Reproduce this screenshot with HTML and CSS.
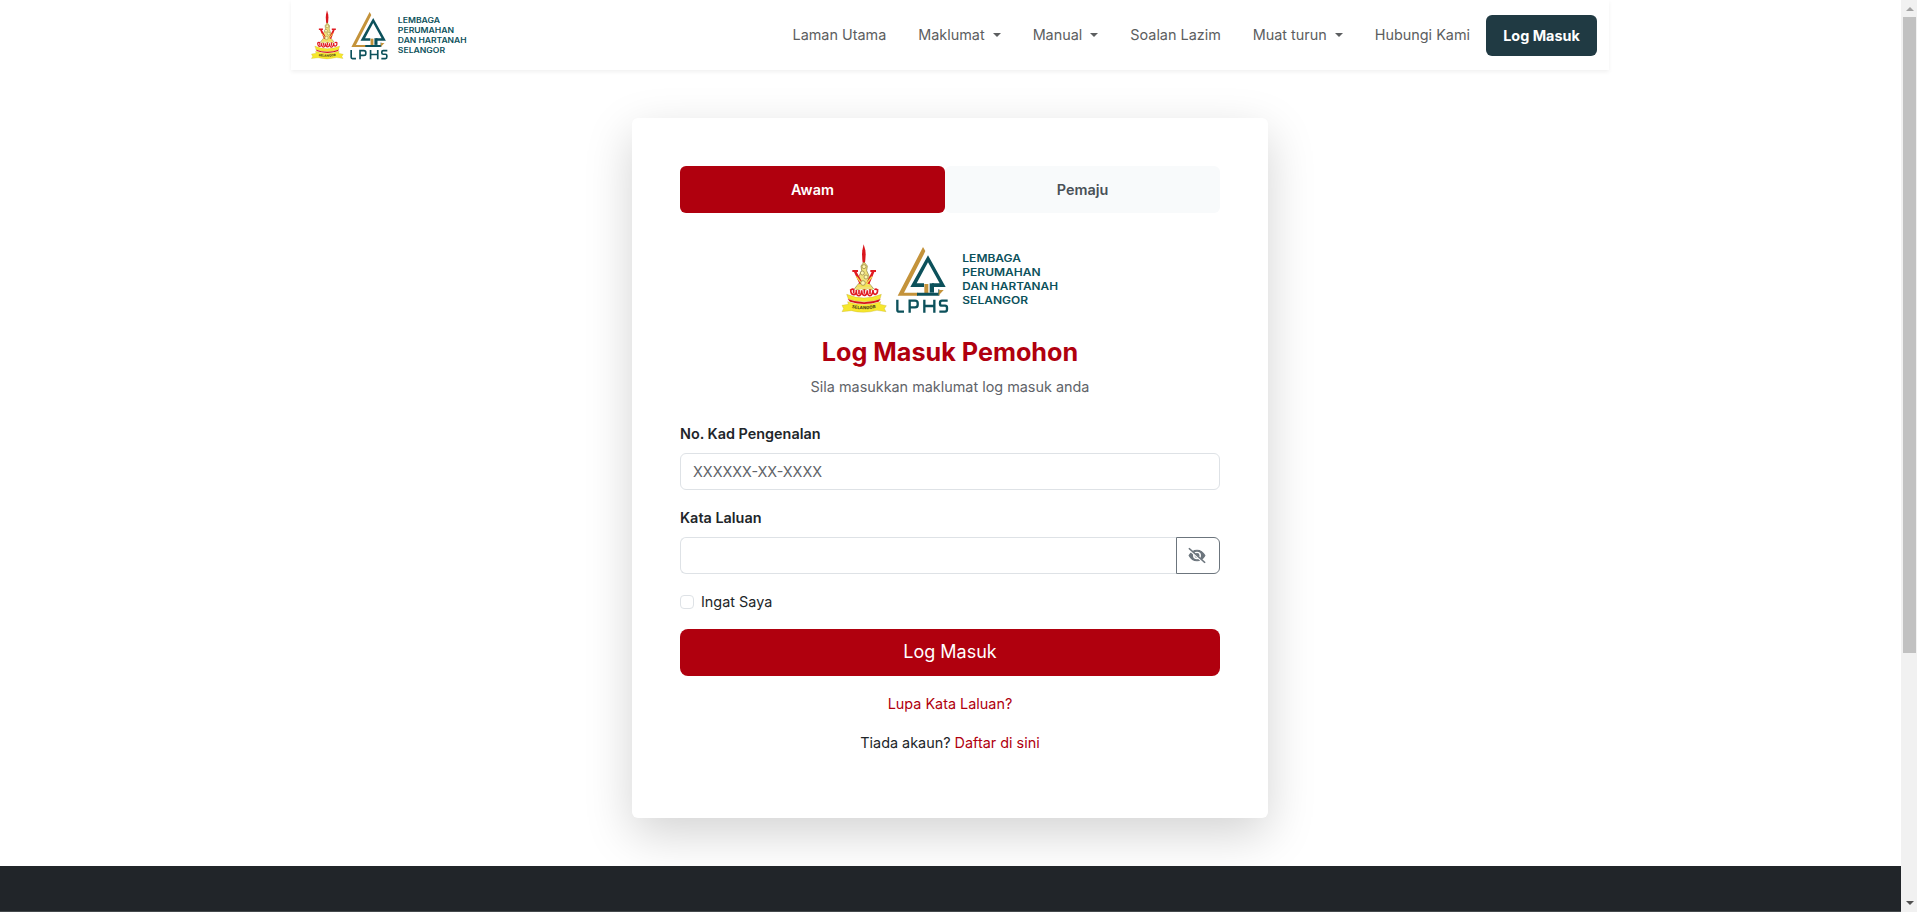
FILE: index.html
```html
<!DOCTYPE html>
<html lang="ms">
<head>
<meta charset="utf-8">
<title>Log Masuk Pemohon</title>
<link rel="stylesheet" href="styles.css">
</head>
<body>
<div class="window">
  <div class="page">
    <header class="navbar">
      <svg class="brand" viewBox="60 30 660 225" role="img" aria-label="LPHS">
        <g id="logo">
          <!-- state crest -->
          <path d="M131 43l-4 18-1 12 1 17 1 8h7l1-8 1-17-1-12z" fill="#d9151c"/>
          <path d="M132 96l-9 12 2 14-9 18 4 16-20 24h64l-20-24 4-16-8-18 2-14z" fill="#f0e27a" stroke="#8d7d35" stroke-width="2"/>
          <path d="M97 120h17v6h-4l18 33-9 4-17-37h-5zM168 120h-17v6h4l-16 33 9 4 15-37h5z" fill="#e01b22"/>
          <path d="M109 140l19 24M156 140l-19 24M112 168h40" stroke="#f3e34a" stroke-width="4"/>
          <circle cx="132" cy="110" r="6" fill="#fff7b0" stroke="#8b7b42" stroke-width="2"/>
          <circle cx="127" cy="129" r="6" fill="#fff7b0" stroke="#8b7b42" stroke-width="2"/>
          <circle cx="138" cy="141" r="6" fill="#fff7b0" stroke="#8b7b42" stroke-width="2"/>
          <circle cx="129" cy="159" r="7" fill="#fff7b0" stroke="#8b7b42" stroke-width="2"/>
          <path d="M92 183q0-8 12-7l8 5 12-4 9 5 10-5 10 5 8-6q14 0 12 10l-9 12q-32 9-63 0z" fill="#fff"/>
          <path d="M92 178q0 16 9 16t8-14q-1 17 7 17t9-16q0 15 8 15t9-15q0 17 8 16t9-17q0 14 7 13t7-15M101 178v12M117 180v12M133 178v13M150 178v14M92 181q5-7 11-1M163 179q8-5 10 4" fill="none" stroke="#e01b22" stroke-width="5"/>
          <path d="M80 193q52 22 104 0l-4 14q-47 17-95 0z" fill="#f6e72d" stroke="#b79d2a"/>
          <path d="M83 207q49 20 99 0l-6 8q-43 14-86 0z" fill="#d9151c"/>
          <path d="M66 226l19-3-2-8q49 17 99 0l-2 8 19 4-6 9 5 9-27-4q-40 11-77 1l-28 3 5-9z" fill="#f6e72d" stroke="#c1ae2b"/>
          <path id="ribbon" d="M95 234q39 8 76-1" fill="none"/>
          <text class="ribbon-text"><textPath href="#ribbon" textLength="73" lengthAdjust="spacingAndGlyphs">SELANGOR</textPath></text>
          <!-- roof mark -->
          <path d="M309 51L233 197H294V188H252L312 72L316 63Z" fill="#c4933b"/>
          <path fill="#0c515b" fill-rule="evenodd" d="M324 76L271 171H312V160H290L324 97L359 160H336V171H377Z"/>
          <path d="M329 160h13v28h-13z" fill="#0c515b"/>
          <path d="M313 162h12v27h-12z" fill="#c4933b"/>
          <path d="M291 188H355V178H358V197H291Z" fill="#0c515b"/>
          <path d="M357 180h14l-16 17z" fill="#c4933b"/>
          <path fill="none" stroke="#0c515b" stroke-width="7" d="M232 209v31q0 5 5 5h15M269 248V212h16q8 0 8 7v6q0 7-8 7h-16M313 209v39M343 209v39M313 228h30M383 212h-17q-6 0-6 6v3q0 6 6 6h9q6 0 6 6v5q0 7-6 7h-17"/>
          <g class="logo-text">
            <text x="427" y="95" textLength="176" lengthAdjust="spacingAndGlyphs">LEMBAGA</text>
            <text x="427" y="138" textLength="235" lengthAdjust="spacingAndGlyphs">PERUMAHAN</text>
            <text x="427" y="181" textLength="287" lengthAdjust="spacingAndGlyphs">DAN HARTANAH</text>
            <text x="427" y="223" textLength="197" lengthAdjust="spacingAndGlyphs">SELANGOR</text>
          </g>
        </g>
      </svg>
      <nav class="nav">
        <a class="nav-link">Laman Utama</a>
        <a class="nav-link caret">Maklumat</a>
        <a class="nav-link caret">Manual</a>
        <a class="nav-link">Soalan Lazim</a>
        <a class="nav-link caret">Muat turun</a>
        <a class="nav-link">Hubungi Kami</a>
        <a class="nav-button">Log Masuk</a>
      </nav>
    </header>
    <main class="card">
      <div class="tabs">
        <a class="tab active">Awam</a>
        <a class="tab">Pemaju</a>
      </div>
      <svg class="card-logo" viewBox="60 30 660 225" role="img" aria-label="LPHS"><use href="#logo"/></svg>
      <h1 class="title">Log Masuk Pemohon</h1>
      <p class="subtitle">Sila masukkan maklumat log masuk anda</p>
      <form class="form">
        <label class="label">No. Kad Pengenalan</label>
        <input class="input" type="text" placeholder="XXXXXX-XX-XXXX">
        <label class="label">Kata Laluan</label>
        <div class="group">
          <input class="input" type="password">
          <button class="toggle" type="button" aria-label="Papar">
            <svg width="18" height="17" viewBox="0 0 16 16" preserveAspectRatio="none" fill="none" stroke="currentColor"><path d="M1 8Q3.500 3 8 3T15 8Q12.500 13 8 13T1 8Z" fill="currentColor"/><circle cx="8" cy="8" r="2.900" stroke="#fff" stroke-width="1.300"/><path d="M1.200 2.600L14.200 14.900" stroke="#fff" stroke-width="2"/><path d="M.8 1.200L15.200 14.800" stroke-width="1.500"/></svg>
          </button>
        </div>
        <label class="remember"><input class="check" type="checkbox">Ingat Saya</label>
        <button class="submit" type="button">Log Masuk</button>
      </form>
      <a class="forgot">Lupa Kata Laluan?</a>
      <p class="register">Tiada akaun? <a class="link">Daftar di sini</a></p>
    </main>
    <footer class="footer"></footer>
  </div>
  <div class="scrollbar">
    <i class="arrow up"></i>
    <i class="thumb"></i>
    <i class="arrow down"></i>
  </div>
</div>
</body>
</html>
```
FILE: styles.css
```css
* { box-sizing: border-box; }
body {
  margin: 0;
  overflow: hidden;
  background: #fff;
  color: #212529;
  font: 400 14.4px/1.5 Inter, "Liberation Sans", sans-serif;
}
.window { display: flex; height: 912px; }
.page {
  flex: 1;
  display: flex;
  flex-direction: column;
  align-items: center;
  padding-right: 1px;
}
.navbar {
  width: 1318px;
  height: 70px;
  padding: 0 12px 0 19px;
  display: flex;
  justify-content: space-between;
  align-items: flex-start;
  background: #fff;
  box-shadow: 0 2px 4px rgba(0, 0, 0, .06);
}
.brand { width: 158px; height: 54px; margin-top: 7px; }
.nav { display: flex; align-items: center; height: 70px; }
.nav-link { padding: 0 16px; color: #5c5e60; }
.caret::after {
  content: "";
  display: inline-block;
  margin-left: 8px;
  vertical-align: 3.5px;
  border: 4px solid transparent;
  border-top-color: currentColor;
  border-bottom: 0;
}
.nav-button {
  width: 111px;
  height: 41px;
  line-height: 42px;
  text-align: center;
  border-radius: 6px;
  background: #203a43;
  color: #fff;
  font-weight: 700;
}
.card {
  width: 636px;
  height: 700px;
  margin: 48px 0;
  padding: 48px;
  flex: none;
  display: flex;
  flex-direction: column;
  align-items: center;
  border-radius: 6px;
  background: #fff;
  box-shadow: 0 16px 48px rgba(0, 0, 0, .175);
}
.tabs { display: flex; width: 100%; }
.tab {
  flex: 1;
  height: 47px;
  line-height: 47px;
  text-align: center;
  border-radius: 6px;
  background: #f8fafb;
  color: #495057;
  font-weight: 600;
}
.tab.active { flex: 0 0 265px; background: #b0000e; color: #fff; }
.card-logo { width: 220px; height: 75px; margin: 27px 0 20px; }
.title {
  margin: 0;
  font-size: 25.2px;
  line-height: 34px;
  font-weight: 700;
  color: #b0000e;
}
.subtitle { margin: 7px 0 25px; line-height: 22px; color: #5f6469; }
.form { width: 100%; display: flex; flex-direction: column; }
.label { height: 22px; line-height: 22px; margin-bottom: 8px; font-weight: 600; }
.input {
  width: 100%;
  height: 37px;
  padding: 0 12px;
  margin: 0 0 17px;
  border: 1px solid #dee2e6;
  border-radius: 6px;
  font: inherit;
  background: #fff;
}
.input::placeholder { color: #5f6469; opacity: 1; }
.group { display: flex; margin-bottom: 17px; }
.group .input { margin: 0; border-right: 0; border-radius: 6px 0 0 6px; }
.toggle {
  width: 44px;
  flex: none;
  display: grid;
  place-items: center;
  padding: 0 2px 0 0;
  border: 1px solid #6c757d;
  border-radius: 0 6px 6px 0;
  background: #fff;
  color: #6c757d;
}
.remember { display: flex; align-items: center; gap: 7px; height: 22px; margin-bottom: 16px; }
.check {
  appearance: none;
  width: 14px;
  height: 14px;
  margin: 0;
  border: 1px solid #dee2e6;
  border-radius: 4px;
}
.submit {
  height: 47px;
  padding: 0 0 2px;
  border: 0;
  border-radius: 8px;
  background: #b0000e;
  color: #fff;
  font: 400 18px/45px Inter, sans-serif;
}
.forgot { margin-top: 17px; line-height: 22px; color: #b0000e; }
.register { margin: 17px 0 0; line-height: 22px; }
.link { color: #b0000e; }
.footer { width: calc(100% + 1px); height: 46px; flex: none; align-self: flex-start; background: #212529; border-bottom: 1px solid #45494c; }
.scrollbar {
  width: 16px;
  display: flex;
  flex-direction: column;
  align-items: center;
  padding: 7px 1px 7px 2px;
  background: #f1f1f1;
}
.arrow { border: 4px solid transparent; }
.up { border-top: 0; border-bottom-color: #a3a3a3; }
.down { margin-top: auto; border-bottom: 0; border-top-color: #505050; }
.thumb { width: 13px; height: 636px; margin-top: 6px; background: #c1c1c1; }
.logo-text { font: 600 30px Inter, sans-serif; fill: #0c515b; }
.ribbon-text { font: 800 13px Inter, sans-serif; fill: #4d461a; }
```
